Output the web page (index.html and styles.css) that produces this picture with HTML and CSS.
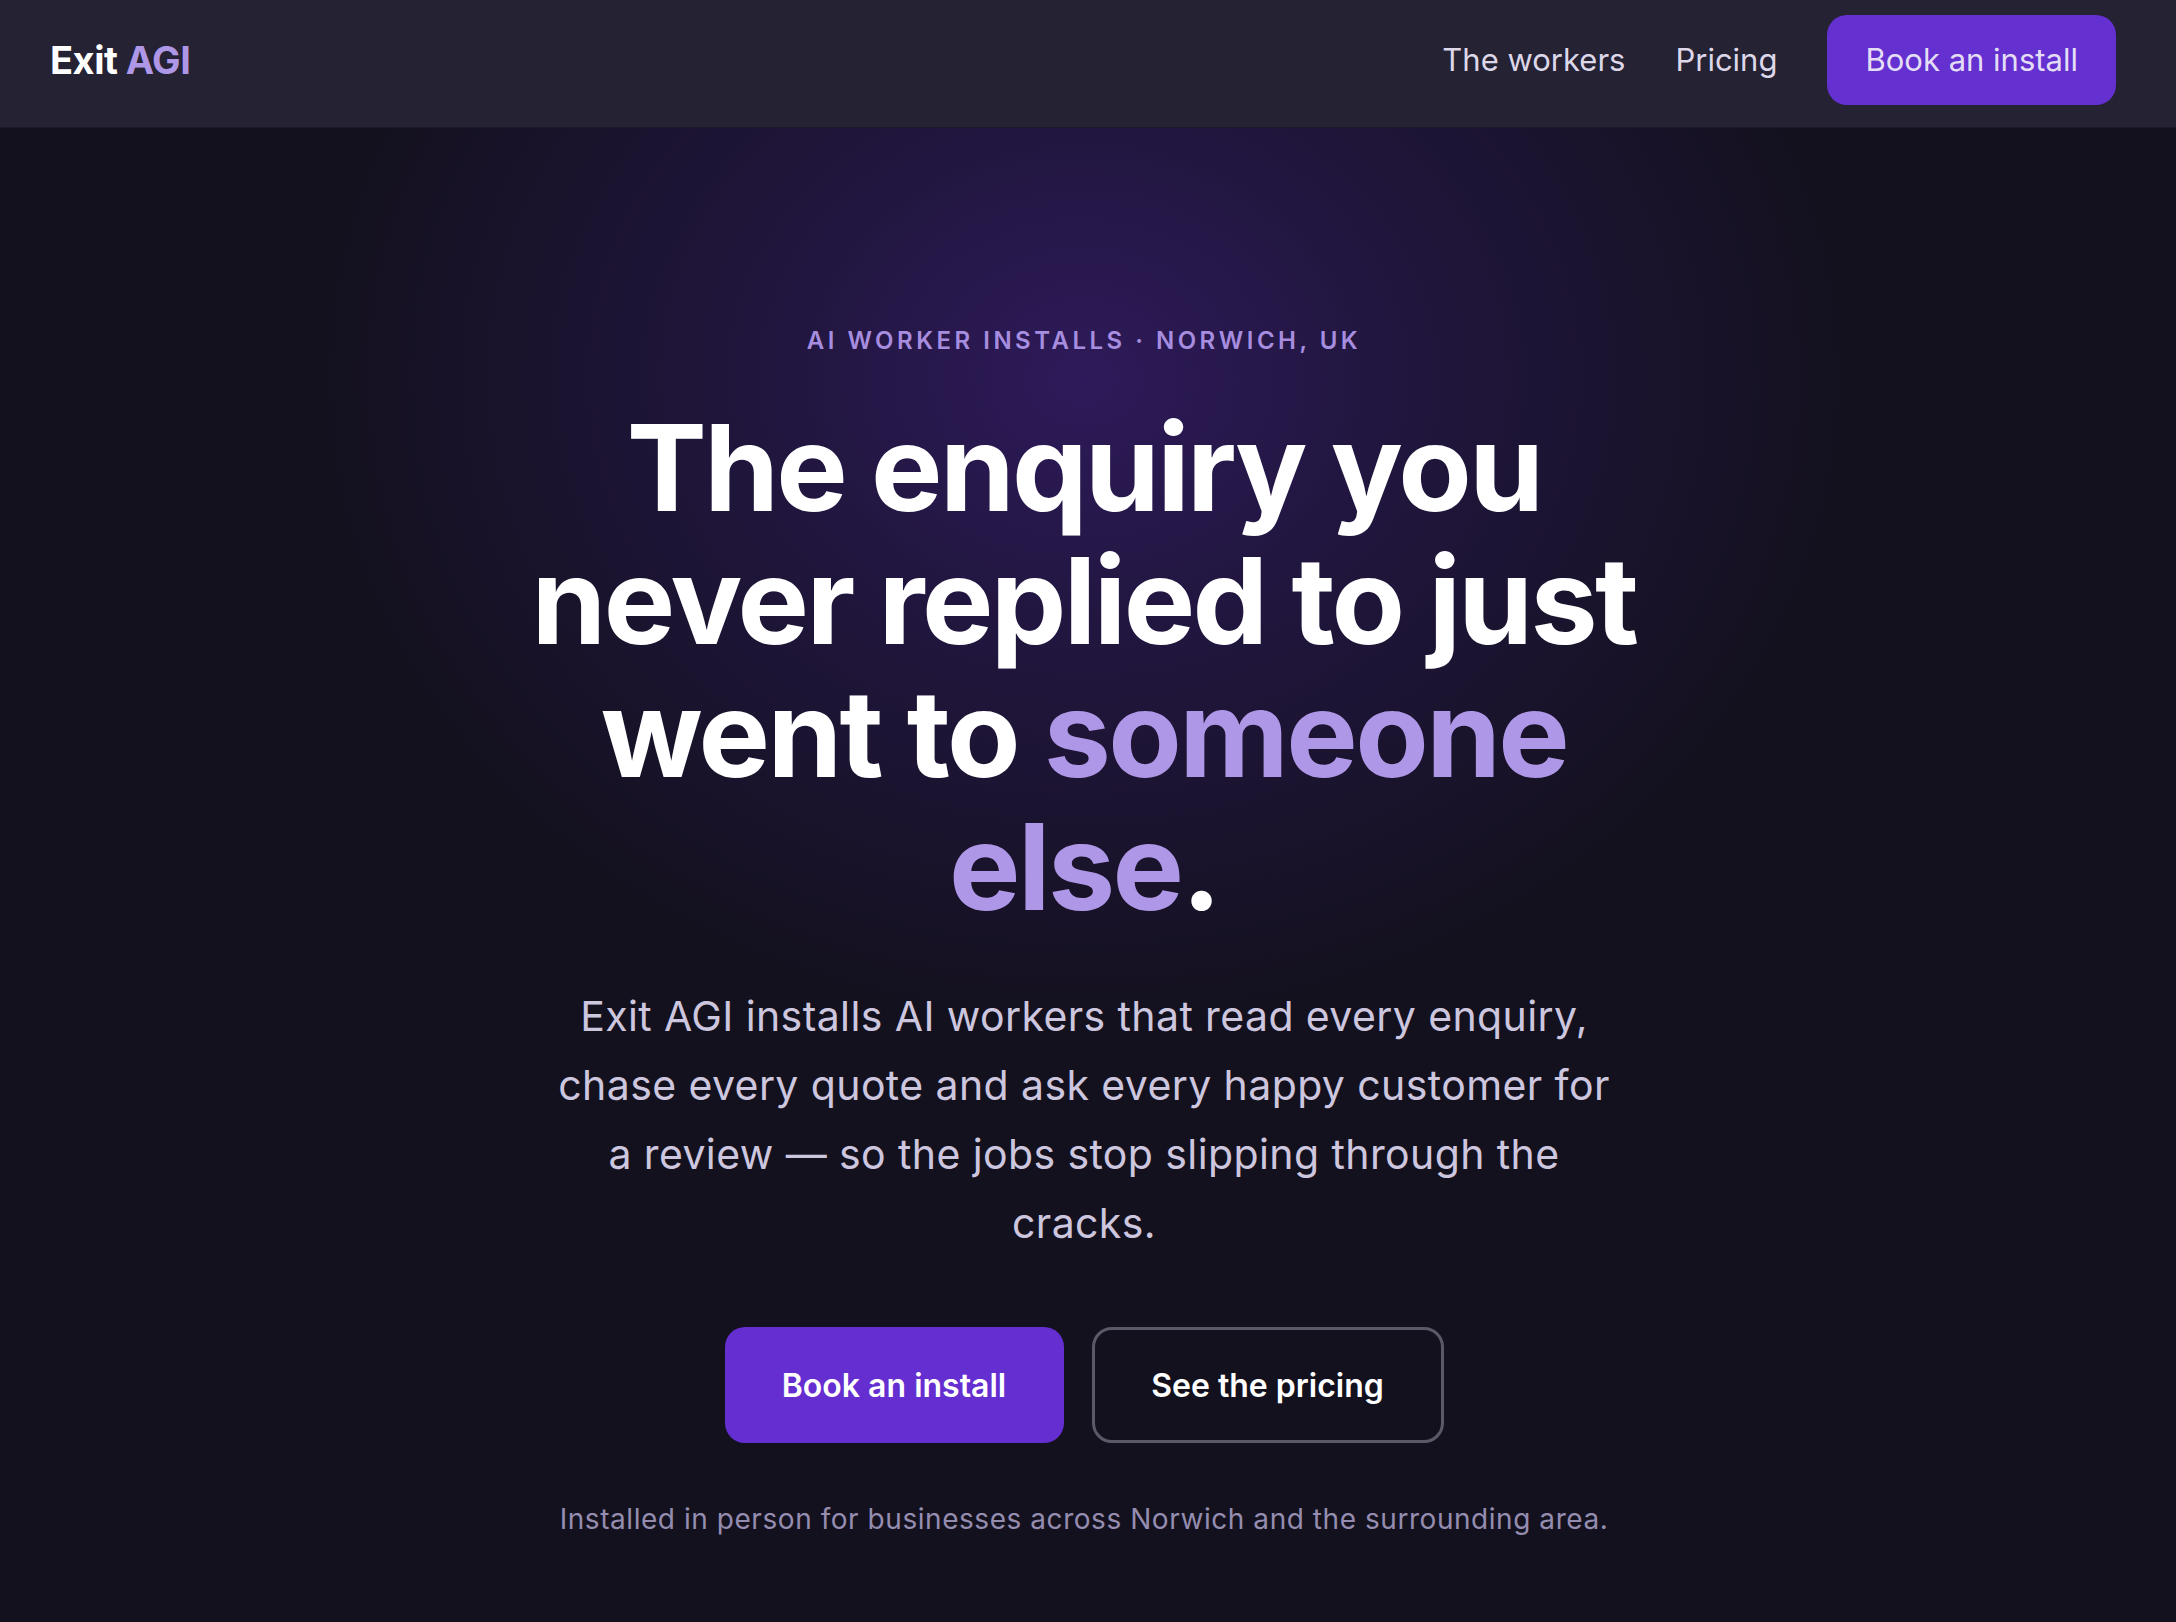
FILE: index.html
```html
<!DOCTYPE html>
<html lang="en">
<head>
    <meta charset="UTF-8">
    <meta name="viewport" content="width=device-width, initial-scale=1.0">
    <title>Exit AGI</title>
    <link rel="stylesheet" href="styles.css">
</head>
<body>
    <header class="nav">
        <a class="logo" href="#">Exit <span class="accent">AGI</span></a>
        <nav class="links">
            <a href="#workers">The workers</a>
            <a href="#pricing">Pricing</a>
            <a class="btn btn-nav" href="#book">Book an install</a>
        </nav>
    </header>

    <main class="hero">
        <p class="eyebrow">AI worker installs · Norwich, UK</p>
        <h1>The enquiry you never replied to just went to <span class="accent">someone else</span>.</h1>
        <p class="lead">Exit AGI installs AI workers that read every enquiry, chase every quote and ask every happy customer for a review — so the jobs stop slipping through the cracks.</p>
        <div class="actions">
            <a class="btn btn-primary" href="#book">Book an install</a>
            <a class="btn btn-ghost" href="#pricing">See the pricing</a>
        </div>
        <p class="note">Installed in person for businesses across Norwich and the surrounding area.</p>
    </main>
</body>
</html>
```

FILE: styles.css
```css
*{
    box-sizing: border-box;
}
html, body{
    height: 100%;
}
body{
    margin: 0;
    background-color: #14111f;
    color: #ffffff;
    font-family: Inter, "Noto Sans", sans-serif;
}
a{
    color: inherit;
    text-decoration: none;
}
.accent{
    color: #ae97e6;
}

/* nav */
.nav{
    height: 128px;
    display: flex;
    align-items: center;
    justify-content: space-between;
    padding: 0 60px 8px 50px;
    background-color: #252233;
    border-bottom: 1px solid #1d1a2a;
}
.logo{
    font-size: 38px;
    font-weight: 700;
    letter-spacing: -0.5px;
}
.links{
    display: flex;
    align-items: center;
    gap: 50px;
    font-size: 31px;
    color: #ddd7ea;
}
.btn{
    display: flex;
    align-items: center;
    justify-content: center;
    border-radius: 20px;
}
.btn-nav{
    height: 90px;
    padding: 0 38px;
    background-color: #6430d0;
    color: #e4ddf6;
}

/* hero */
.hero{
    display: flex;
    flex-direction: column;
    align-items: center;
    text-align: center;
    padding: 195px 8px 0 0;
    min-height: calc(100% - 128px);
    background: radial-gradient(ellipse 760px 640px at 1084px 250px, #2e1a5a 0%, #21163f 40%, #14111f 100%);
}
.eyebrow{
    margin: 0;
    font-size: 24px;
    line-height: 36px;
    font-weight: 600;
    letter-spacing: 3.5px;
    text-transform: uppercase;
    color: #a68ddf;
}
h1{
    margin: 42px 0 0;
    max-width: 1180px;
    font-size: 120px;
    line-height: 133px;
    font-weight: 700;
    letter-spacing: -2.6px;
}
.lead{
    margin: 49px 0 0;
    max-width: 1068px;
    font-size: 41px;
    line-height: 69px;
    letter-spacing: 0.4px;
    color: #cdc6df;
}
.actions{
    display: flex;
    gap: 28px;
    margin-top: 69px;
}
.btn-primary, .btn-ghost{
    height: 116px;
    font-size: 32px;
    font-weight: 600;
}
.btn-primary{
    width: 339px;
    background-color: #642ed0;
}
.btn-ghost{
    width: 352px;
    border: 3px solid #5d5868;
}
.note{
    margin: 56px 0 0;
    font-size: 28px;
    line-height: 40px;
    letter-spacing: 0.55px;
    color: #948db0;
}
```
